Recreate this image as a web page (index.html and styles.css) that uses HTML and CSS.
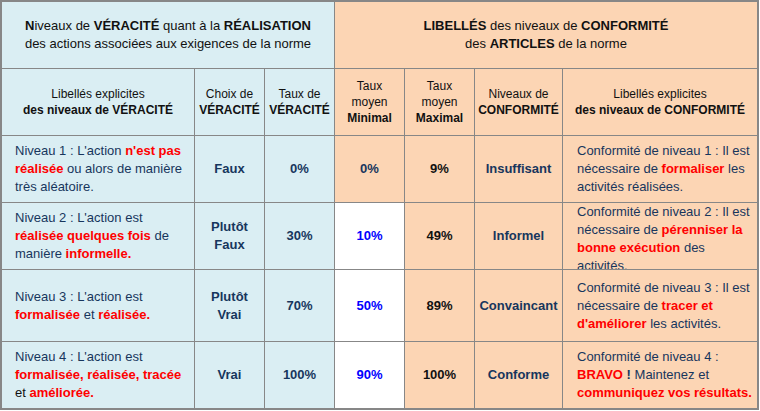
FILE: index.html
```html
<!DOCTYPE html>
<html lang="fr">
<head>
<meta charset="utf-8">
<link rel="stylesheet" href="styles.css">
</head>
<body>
<div class="grid">
  <div class="cell blue head1 span3"><div class="t"><b>N</b>iveaux de <b>VÉRACITÉ</b> quant à la <b>RÉALISATION</b><br>des actions associées aux exigences de la norme</div></div>
  <div class="cell peach head1 span4"><div class="t"><b>LIBELLÉS</b> des niveaux de <b>CONFORMITÉ</b><br>des <b>ARTICLES</b> de la norme</div></div>

  <div class="cell blue head2"><div class="t">Libellés explicites<br><b>des niveaux de VÉRACITÉ</b></div></div>
  <div class="cell blue head2"><div class="t">Choix de<br><b>VÉRACITÉ</b></div></div>
  <div class="cell blue head2"><div class="t">Taux de<br><b>VÉRACITÉ</b></div></div>
  <div class="cell peach head2"><div class="t">Taux<br>moyen<br><b>Minimal</b></div></div>
  <div class="cell peach head2"><div class="t">Taux<br>moyen<br><b>Maximal</b></div></div>
  <div class="cell peach head2"><div class="t">Niveaux de<br><b>CONFORMITÉ</b></div></div>
  <div class="cell peach head2"><div class="t">Libellés explicites<br><b>des niveaux de CONFORMITÉ</b></div></div>

  <div class="cell blue txt l1"><div class="t">Niveau 1 : L'action <b class="red">n'est pas réalisée</b> ou alors de manière très aléatoire.</div></div>
  <div class="cell blue num"><div class="t"><b>Faux</b></div></div>
  <div class="cell blue num"><div class="t"><b>0%</b></div></div>
  <div class="cell peach num"><div class="t"><b>0%</b></div></div>
  <div class="cell peach num black"><div class="t"><b>9%</b></div></div>
  <div class="cell peach num"><div class="t"><b>Insuffisant</b></div></div>
  <div class="cell peach txt l7"><div class="t">Conformité de niveau 1 : Il est nécessaire de <b class="red">formaliser</b> les activités réalisées.</div></div>

  <div class="cell blue txt l1"><div class="t">Niveau 2 : L'action est <b class="red">réalisée quelques fois</b> de manière <b class="red">informelle.</b></div></div>
  <div class="cell blue num"><div class="t"><b>Plutôt<br>Faux</b></div></div>
  <div class="cell blue num"><div class="t"><b>30%</b></div></div>
  <div class="cell white num bluetext"><div class="t"><b>10%</b></div></div>
  <div class="cell peach num black"><div class="t"><b>49%</b></div></div>
  <div class="cell peach num"><div class="t"><b>Informel</b></div></div>
  <div class="cell peach txt l7"><div class="t">Conformité de niveau 2 : Il est nécessaire de <b class="red">pérenniser la bonne exécution</b> des activités.</div></div>

  <div class="cell blue txt l1"><div class="t">Niveau 3 : L'action est <b class="red">formalisée</b> et <b class="red">réalisée.</b></div></div>
  <div class="cell blue num"><div class="t"><b>Plutôt<br>Vrai</b></div></div>
  <div class="cell blue num"><div class="t"><b>70%</b></div></div>
  <div class="cell white num bluetext"><div class="t"><b>50%</b></div></div>
  <div class="cell peach num black"><div class="t"><b>89%</b></div></div>
  <div class="cell peach num"><div class="t"><b>Convaincant</b></div></div>
  <div class="cell peach txt l7"><div class="t">Conformité de niveau 3 : Il est nécessaire de <b class="red">tracer et d'améliorer</b> les activités.</div></div>

  <div class="cell blue txt l1"><div class="t">Niveau 4 : L'action est <b class="red">formalisée, réalisée, tracée</b> <span class="dark">et</span> <b class="red">améliorée.</b></div></div>
  <div class="cell blue num"><div class="t"><b>Vrai</b></div></div>
  <div class="cell blue num"><div class="t"><b>100%</b></div></div>
  <div class="cell white num bluetext"><div class="t"><b>90%</b></div></div>
  <div class="cell peach num black"><div class="t"><b>100%</b></div></div>
  <div class="cell peach num"><div class="t"><b>Conforme</b></div></div>
  <div class="cell peach txt l7"><div class="t">Conformité de niveau 4 : <b class="red">BRAVO</b> <b>!</b> Maintenez et <b class="red">communiquez vos résultats.</b></div></div>
</div>
</body>
</html>
```

FILE: styles.css
```css
html, body {
  margin: 0;
  padding: 0;
  background: #ffffff;
}

.grid {
  display: inline-grid;
  grid-template-columns: 192px 69px 69px 69px 69px 87px 194px;
  grid-template-rows: 66px 66px 66px 66px 71px 66px;
  gap: 1px;
  background: #878787;
  border: 2px solid #878787;
  font-family: "Liberation Sans", Arial, sans-serif;
  font-size: 13px;
  line-height: 18px;
  color: #17365d;
}

.cell {
  display: flex;
  overflow: hidden;
  min-width: 0;
}

.t {
  flex: 1 1 auto;
  min-width: 0;
  margin: auto 0;
}

.blue { background: #daeef3; }
.peach { background: #fcd5b4; }
.white { background: #ffffff; }

.span3 { grid-column: span 3; }
.span4 { grid-column: span 4; }

.head1 {
  text-align: center;
  color: #111111;
}

.head2 {
  text-align: center;
  font-size: 12px;
  line-height: 16px;
  color: #111111;
}

.num {
  text-align: center;
}

.txt {
  text-align: left;
}

.l1 { padding: 0 3px 0 13px; }
.l7 { padding: 0 3px 0 14px; }

.red { color: #ff0000; }
.black { color: #111111; }
.bluetext { color: #0000ff; }
.dark { color: #111111; }
```
